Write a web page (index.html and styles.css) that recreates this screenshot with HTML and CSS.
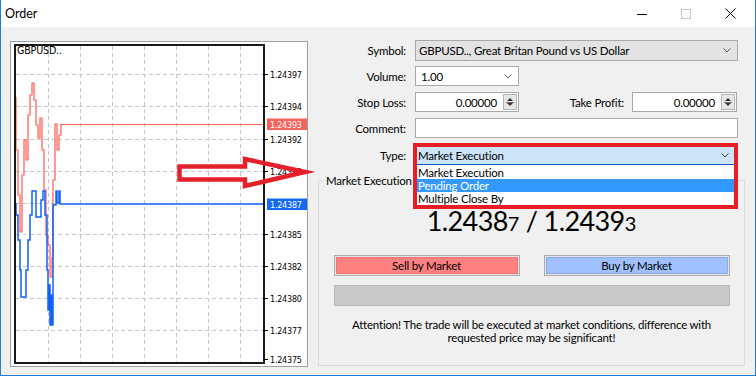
FILE: index.html
```html
<!DOCTYPE html>
<html>
<head>
<meta charset="utf-8">
<title>Order</title>
<link rel="stylesheet" href="styles.css">
</head>
<body>
<div class="window">
  <div class="titlebar">
    <span class="title">Order</span>
    <div class="controls">
      <span class="ctl"><svg width="10" height="10" viewBox="0 0 10 10"><path d="M0 5.5H10" stroke="#000" stroke-width="1"/></svg></span>
      <span class="ctl"><svg width="10" height="10" viewBox="0 0 10 10"><rect x="0.5" y="0.5" width="9" height="9" fill="none" stroke="#c4c4c4"/></svg></span>
      <span class="ctl"><svg width="11" height="11" viewBox="0 0 11 11"><path d="M0.5 0.5L10.5 10.5M10.5 0.5L0.5 10.5" stroke="#000" stroke-width="1"/></svg></span>
    </div>
  </div>
  <div class="content">
    <div class="chart">
      <svg class="chart-svg" width="296" height="324" viewBox="11 42 296 324">
        <g class="grid">
          <path d="M48.5 46V362M80.5 46V362M112.5 46V362M144.5 46V362M176.5 46V362M208.5 46V362M240.5 46V362"/>
          <path d="M16 74.5H263M16 106.5H263M16 139.5H263M16 171.5H263M16 203.5H263M16 234.5H263M16 266.5H263M16 298.5H263M16 330.5H263"/>
        </g>
        <polyline class="red-line" points="16,97 16,150 18,150 18,195 20,195 20,232 22,232 22,175 24,175 24,140 26,140 26,160 28,160 28,115 30,115 30,95 32,95 32,83 34,83 34,100 36,100 36,125 38,125 38,138 40,138 40,118 42,118 42,150 44,150 44,190 46,190 46,235 48,235 48,245 50,245 50,277 52,277 52,258 53,258 53,180 55,180 55,124 57,124 57,150 59,150 59,135 61,135 61,124.5 264,124.5"/>
        <polyline class="blue-line" points="16,203 16,215 18,215 18,240 20,240 20,270 21,270 21,297 26,297 26,270 28,270 28,240 30,240 30,215 32,215 32,191 36,191 36,217 41,217 41,200 43,200 43,191 45,191 45,215 47,215 47,270 48,270 48,310 49,310 49,285 50,285 50,325 51,325 51,295 52,295 52,325 53,325 53,205 56,205 56,191 57,191 57,203 59,203 59,191 60,191 60,204 264,204"/>
        <rect class="frame" x="15" y="45" width="249" height="318"/>
        <path class="ticks" d="M264 74.5H268M264 106.5H268M264 139.5H268M264 171.5H268M264 234.5H268M264 266.5H268M264 298.5H268M264 330.5H268M264 359.5H268"/>
        <text class="title-sym" x="17" y="53.5">GBPUSD..</text>
        <g class="axis">
          <text x="270" y="77.5">1.24397</text>
          <text x="270" y="109.5">1.24394</text>
          <text x="270" y="142.5">1.24392</text>
          <text x="270" y="174.5">1.24390</text>
          <text x="270" y="237.5">1.24385</text>
          <text x="270" y="269.5">1.24382</text>
          <text x="270" y="301.5">1.24380</text>
          <text x="270" y="333.5">1.24377</text>
          <text x="270" y="362.5">1.24375</text>
        </g>
        <rect class="ask-tag" x="267" y="118.5" width="40" height="11.5"/>
        <text class="tag-text" x="270" y="127.5">1.24393</text>
        <rect class="bid-tag" x="267" y="198.5" width="40" height="11.5"/>
        <text class="tag-text" x="270" y="207.5">1.24387</text>
      </svg>
    </div>
    <div class="form">
      <div class="row r-symbol">
        <span class="lbl">Symbol:</span>
        <div class="combo gray wide h21">
          <span class="combo-text">GBPUSD.., Great Britan Pound vs US Dollar</span>
          <svg class="chev" width="8" height="5" viewBox="0 0 8 5"><path d="M0.5 0.5L4 4L7.5 0.5" fill="none" stroke="#5a5a5a"/></svg>
        </div>
      </div>
      <div class="row r-volume">
        <span class="lbl">Volume:</span>
        <div class="combo small">
          <span class="combo-text pad5">1.00</span>
          <svg class="chev" width="8" height="5" viewBox="0 0 8 5"><path d="M0.5 0.5L4 4L7.5 0.5" fill="none" stroke="#5a5a5a"/></svg>
        </div>
      </div>
      <div class="row r-stops">
        <span class="lbl">Stop Loss:</span>
        <div class="spin-input sl">
          <span class="spin-value">0.00000</span>
          <span class="spinner"><span class="up"></span><span class="sep"></span><span class="down"></span></span>
        </div>
        <span class="lbl tp-lbl">Take Profit:</span>
        <div class="spin-input tp">
          <span class="spin-value">0.00000</span>
          <span class="spinner"><span class="up"></span><span class="sep"></span><span class="down"></span></span>
        </div>
      </div>
      <div class="row r-comment">
        <span class="lbl">Comment:</span>
        <div class="textbox wide"></div>
      </div>
      <div class="row r-type">
        <span class="lbl">Type:</span>
        <div class="type-field">
          <span class="type-text">Market Execution</span>
          <svg class="chev" width="8" height="5" viewBox="0 0 8 5"><path d="M0.5 0.5L4 4L7.5 0.5" fill="none" stroke="#404040"/></svg>
          <ul class="type-list">
            <li>Market Execution</li>
            <li class="sel">Pending Order</li>
            <li>Multiple Close By</li>
          </ul>
          <span class="highlight"></span>
        </div>
      </div>
      <div class="group">
        <span class="group-title">Market Execution</span>
        <div class="price">1.2438<span class="pip">7</span> / 1.2439<span class="pip">3</span></div>
        <div class="btns">
          <div class="btn sell"><span>Sell by Market</span></div>
          <div class="btn buy"><span>Buy by Market</span></div>
        </div>
        <div class="bar"></div>
        <p class="note">Attention! The trade will be executed at market conditions, difference with<br>requested price may be significant!</p>
      </div>
    </div>
  </div>
  <svg class="arrow" width="140" height="42" viewBox="175 152 140 42">
    <polygon points="179.5,166.5 245,166.5 245,159 305,172 245,186 245,179.5 179.5,179.5"/>
  </svg>
</div>
</body>
</html>
```

FILE: styles.css
```css
* { box-sizing: border-box; margin: 0; padding: 0; }
body {
  margin: 0;
  width: 756px;
  height: 378px;
  overflow: hidden;
  background: #fff;
  font-family: Lato, "Noto Sans", sans-serif;
  font-size: 11.5px;
  letter-spacing: -0.2px;
  color: #000;
}
.window {
  position: relative;
  width: 756px;
  height: 376px;
  border: 1px solid #1c7fd8;
  border-top: none;
  background: #f0f0f0;
  display: flex;
  flex-direction: column;
}
.titlebar {
  flex: none;
  height: 27px;
  background: #fff;
  display: flex;
  align-items: center;
}
.title { padding-left: 4px; font-size: 12.5px; letter-spacing: 0; }
.controls { margin-left: auto; display: flex; padding-right: 3px; }
.ctl { width: 44px; height: 27px; display: flex; align-items: center; justify-content: center; }
.ctl svg { display: block; }

.content { flex: 1; display: flex; align-items: flex-start; padding-left: 9px; }
.chart {
  flex: none;
  margin-top: 14px;
  width: 298px;
  height: 326px;
  border: 1px solid #a0a0a0;
  background: #fff;
}
.chart-svg { display: block; }
.grid path { stroke: #c6c6c6; stroke-width: 1; stroke-dasharray: 4 3; fill: none; }
.frame { fill: none; stroke: #000; stroke-width: 1.8; }
.ticks { stroke: #000; stroke-width: 1; }
.red-line { fill: none; stroke: #ff5a52; stroke-width: 1.2; }
.blue-line { fill: none; stroke: #1262f5; stroke-width: 1.5; }
.title-sym { font-family: "DejaVu Sans", sans-serif; font-size: 9.6px; fill: #000; }
.axis text { font-family: "DejaVu Sans", sans-serif; font-size: 8px; fill: #000; }
.tag-text { font-family: "DejaVu Sans", sans-serif; font-size: 8px; fill: #fff; }
.ask-tag { fill: #f4645c; }
.bid-tag { fill: #1469f2; }

.form {
  flex: none;
  margin-left: 10px;
  width: 430px;
  padding-top: 13px;
  display: flex;
  flex-direction: column;
}
.row { display: flex; align-items: center; height: 20px; }
.r-symbol { height: 21px; }
.r-volume { margin-top: 5px; }
.r-stops { margin-top: 6px; }
.r-comment { margin-top: 6px; }
.r-type { margin-top: 9px; height: 17px; }
.lbl { flex: none; width: 88px; margin-right: 9px; text-align: right; }
.tp-lbl { width: 105px; margin-right: 8px; }

.combo {
  height: 20px;
  display: flex;
  align-items: center;
  border: 1px solid #a8a8a8;
  background: #fff;
  padding-left: 3px;
  padding-right: 6px;
}
.combo.h21 { height: 21px; }
.combo.gray { background: #e3e3e3; }
.wide { width: 323px; }
.small { width: 104px; }
.combo-text { flex: 1; white-space: nowrap; }
.combo-text.pad5 { padding-left: 2px; }
.chev { display: block; flex: none; }

.spin-input {
  height: 20px;
  width: 104px;
  border: 1px solid #a8a8a8;
  background: #fff;
  display: flex;
  align-items: center;
  padding: 1px;
}
.spin-input.tp { width: 105px; }
.spin-value { flex: 1; text-align: right; padding-right: 6px; }
.spinner {
  flex: none;
  width: 14px;
  height: 16px;
  border: 1px solid #b4b4b4;
  background: #e6e6e6;
  display: flex;
  flex-direction: column;
  align-items: center;
  justify-content: space-between;
  padding: 3px 0 3px;
}
.up { width: 0; height: 0; border-left: 3px solid transparent; border-right: 3px solid transparent; border-bottom: 3px solid #333; }
.down { width: 0; height: 0; border-left: 3px solid transparent; border-right: 3px solid transparent; border-top: 3px solid #333; }
.sep { width: 8px; height: 1px; background: #777; }

.textbox { height: 20px; border: 1px solid #a8a8a8; background: #fff; }

.type-field {
  position: relative;
  margin-left: 2px;
  width: 317px;
  height: 17px;
  background: #cce4f7;
  display: flex;
  align-items: center;
  padding-left: 1px;
  padding-right: 5px;
}
.type-text { flex: 1; }
.type-list {
  position: absolute;
  left: 0;
  top: 17px;
  width: 317px;
  height: 41px;
  list-style: none;
  background: #fff;
  border-top: 1px solid #0b5cb8;
  padding-top: 1px;
  z-index: 2;
}
.type-list li { height: 13px; line-height: 13px; padding-left: 1px; }
.type-list li.sel { background: #3399ff; color: #fff; }
.highlight {
  position: absolute;
  left: -4px;
  top: -4px;
  width: 325px;
  height: 66px;
  border: 4px solid #e81e26;
  z-index: 3;
  pointer-events: none;
}

.group {
  position: relative;
  margin-top: 16px;
  width: 427px;
  height: 186px;
  border: 1px solid #dadada;
  display: flex;
  flex-direction: column;
  align-items: center;
  padding: 0 15px;
}
.group-title {
  position: absolute;
  top: -8px;
  left: 5px;
  padding: 0 2px;
  line-height: 15px;
  background: #f0f0f0;
  z-index: 1;
}
.price {
  margin-top: 25px;
  font-size: 27px;
  line-height: 30px;
  letter-spacing: -0.6px;
  white-space: nowrap;
}
.pip { font-size: 20px; letter-spacing: 0; }
.btns { margin-top: 17px; display: flex; gap: 24px; width: 396px; }
.btn {
  width: 186px;
  height: 21px;
  border: 1px solid #adadad;
  background: #e4e4e4;
  padding: 1px;
}
.btn span {
  display: flex;
  height: 100%;
  align-items: center;
  justify-content: center;
  border: 1px solid transparent;
}
.sell span { background: #ff8080; border-color: #f07474; }
.buy span { background: #a0c0ff; border-color: #86aaf2; }
.bar {
  margin-top: 9px;
  width: 396px;
  height: 21px;
  background: #c9c9c9;
  border: 1px solid #b8b8b8;
}
.note { margin-top: 12px; text-align: center; line-height: 13px; white-space: nowrap; }

.arrow {
  position: absolute;
  left: 174px;
  top: 152px;
  pointer-events: none;
  z-index: 5;
}
.arrow polygon { fill: none; stroke: #e5202a; stroke-width: 4.5; stroke-linejoin: miter; stroke-miterlimit: 10; }
```
